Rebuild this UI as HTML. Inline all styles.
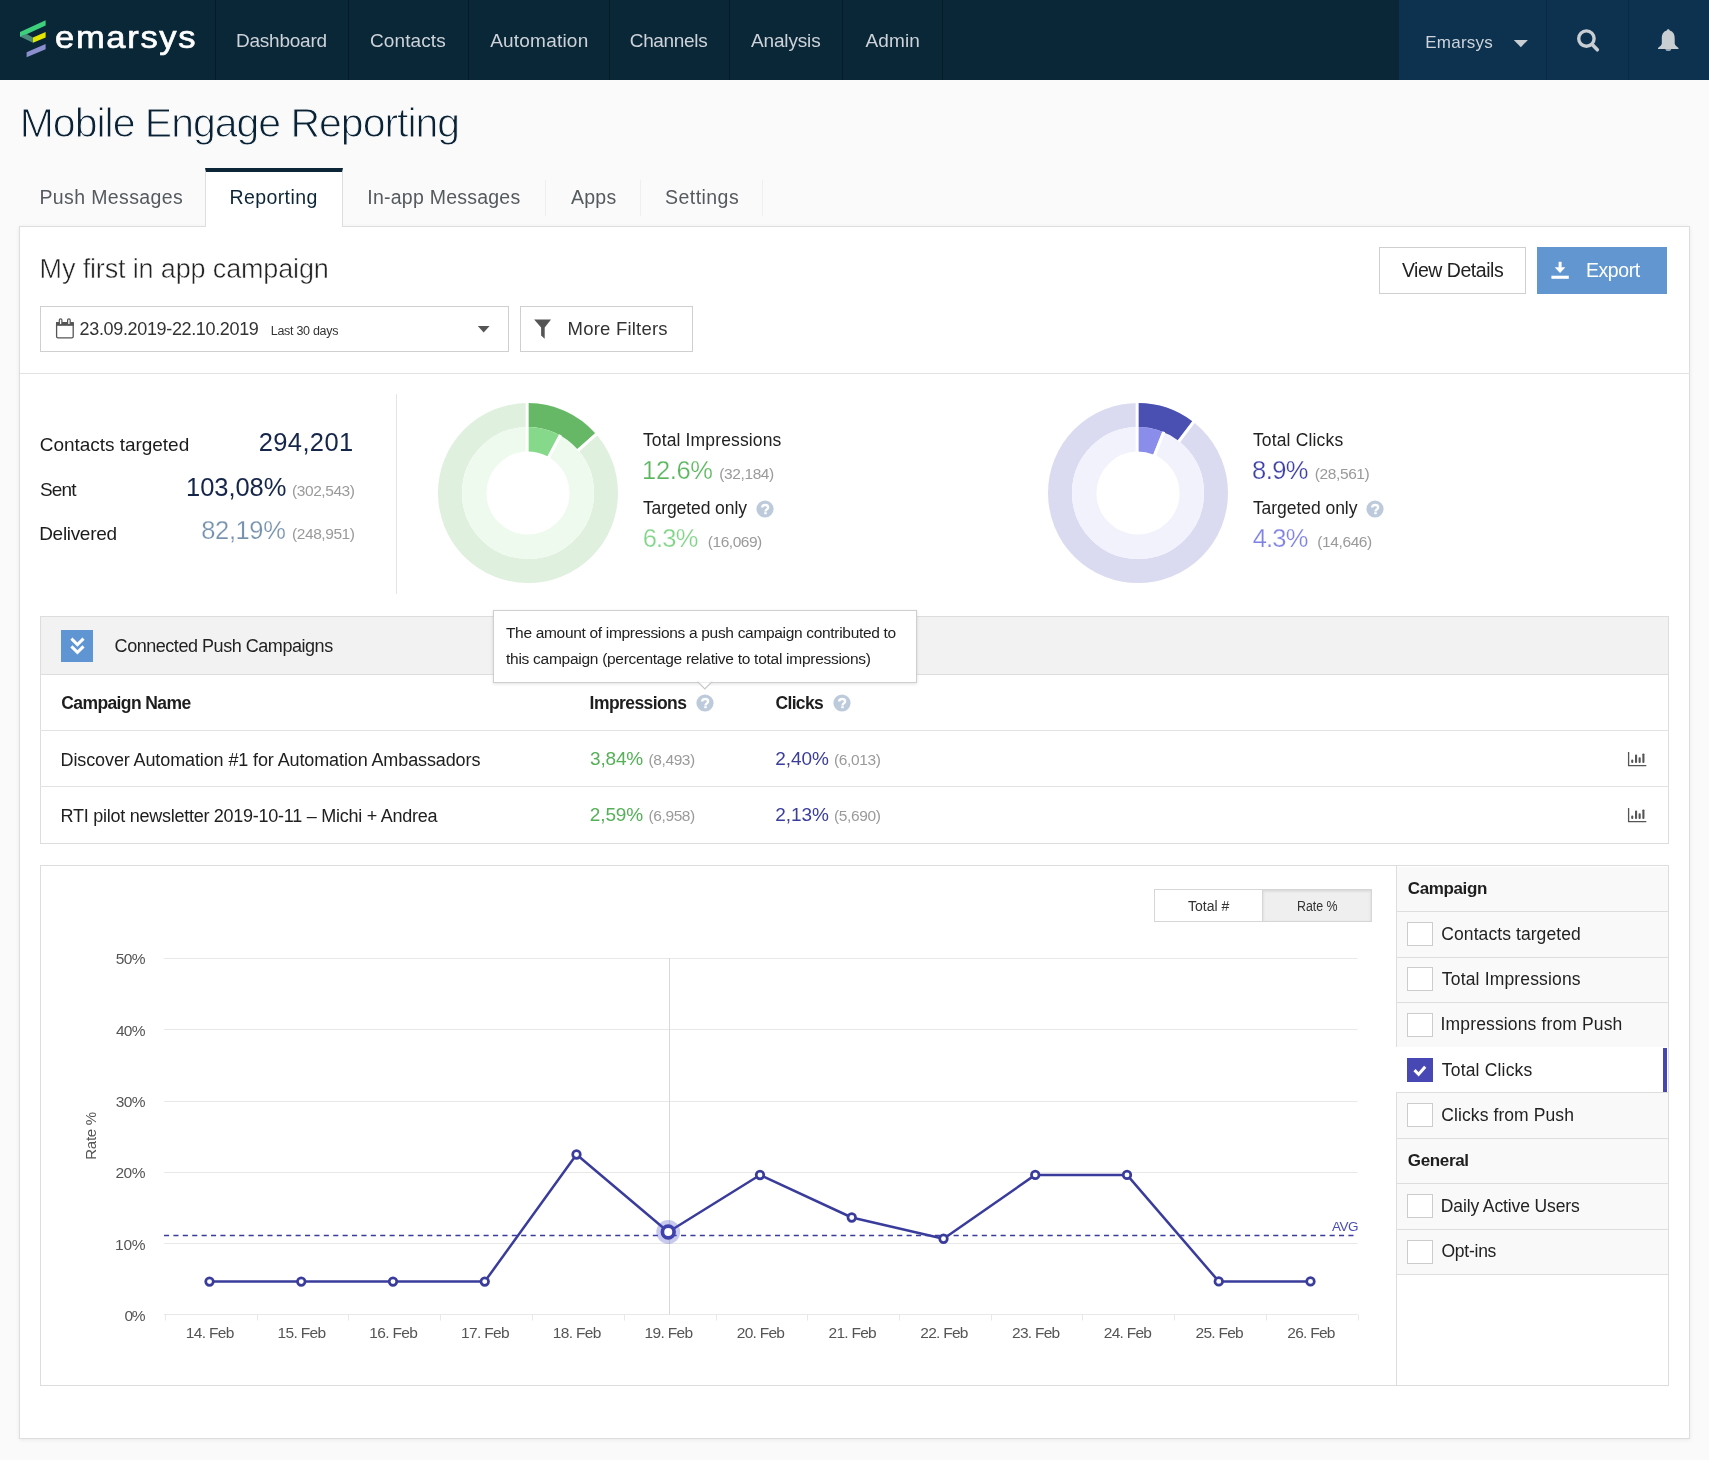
<!DOCTYPE html>
<html><head><meta charset="utf-8"><title>Mobile Engage Reporting</title><style>
html,body{margin:0;padding:0;width:1709px;height:1460px;overflow:hidden;background:#fafafa;font-family:"Liberation Sans",sans-serif;}
.a{position:absolute;box-sizing:border-box;}
.t{position:absolute;white-space:nowrap;font-family:"Liberation Sans",sans-serif;}
svg{position:absolute;overflow:visible;}
.page{position:absolute;left:0;top:0;width:1709px;height:1460px;will-change:transform;}
</style></head><body>
<div class="page">
<div class="a" style="left:0px;top:0px;width:1709px;height:80px;background:#0a2737;"></div>
<div class="a" style="left:1399px;top:0px;width:310px;height:80px;background:#0d3250;"></div>
<div class="a" style="left:215px;top:0px;width:1px;height:80px;background:#051b29;"></div>
<div class="a" style="left:348px;top:0px;width:1px;height:80px;background:#051b29;"></div>
<div class="a" style="left:468px;top:0px;width:1px;height:80px;background:#051b29;"></div>
<div class="a" style="left:609px;top:0px;width:1px;height:80px;background:#051b29;"></div>
<div class="a" style="left:729px;top:0px;width:1px;height:80px;background:#051b29;"></div>
<div class="a" style="left:842px;top:0px;width:1px;height:80px;background:#051b29;"></div>
<div class="a" style="left:942px;top:0px;width:1px;height:80px;background:#051b29;"></div>
<div class="a" style="left:1546px;top:0px;width:1px;height:80px;background:#0a2a42;"></div>
<div class="a" style="left:1628px;top:0px;width:1px;height:80px;background:#0a2a42;"></div>
<svg style="left:0;top:0" width="60" height="80" viewBox="0 0 60 80">
<polygon points="20,32.1 45.6,20.2 45.6,25.4 26.6,34.3 20,37" fill="#3ecf7d"/>
<polygon points="20,36.6 26.6,34.1 33,37.5 33,42.7" fill="#4b8b7b"/>
<polygon points="33,37.5 45.6,32.1 45.6,37.4 33,42.7" fill="#e2e600"/>
<polygon points="26.6,52.3 45.6,44 45.6,49.3 26.6,57.3" fill="#8c8fcf"/>
</svg>
<span class="t" style="left:235.88px;top:31px;font-size:19px;line-height:19px;color:#cdd3d9;letter-spacing:-0.207px;">Dashboard</span>
<span class="t" style="left:370.05px;top:31px;font-size:19px;line-height:19px;color:#cdd3d9;letter-spacing:0.094px;">Contacts</span>
<span class="t" style="left:490.20px;top:31px;font-size:19px;line-height:19px;color:#cdd3d9;letter-spacing:0.211px;">Automation</span>
<span class="t" style="left:629.75px;top:31px;font-size:19px;line-height:19px;color:#cdd3d9;letter-spacing:-0.337px;">Channels</span>
<span class="t" style="left:751.00px;top:31px;font-size:19px;line-height:19px;color:#cdd3d9;letter-spacing:-0.159px;">Analysis</span>
<span class="t" style="left:865.50px;top:31px;font-size:19px;line-height:19px;color:#cdd3d9;letter-spacing:0.143px;">Admin</span>
<span class="t" style="left:1425.24px;top:34px;font-size:17px;line-height:17px;color:#cdd3d9;letter-spacing:0.238px;">Emarsys</span>
<span class="t" style="left:54.62px;top:21px;font-size:32px;line-height:32px;color:#ffffff;letter-spacing:1.559px;transform:scaleX(1.0789);transform-origin:0 0;-webkit-text-stroke:0.7px #fff;">emarsys</span>
<svg style="left:1500px;top:30px" width="40" height="30" viewBox="1500 30 40 30"><polygon points="1513.8,39.9 1527.9,39.9 1520.85,47.2" fill="#c9ced3"/></svg>
<svg style="left:1560px;top:20px" width="50" height="40" viewBox="1560 20 50 40">
<circle cx="1586.4" cy="38.6" r="7.7" fill="none" stroke="#c9ced3" stroke-width="3.4"/>
<line x1="1592.2" y1="44.6" x2="1597.3" y2="49.8" stroke="#c9ced3" stroke-width="3.6" stroke-linecap="round"/>
</svg>
<svg style="left:1650px;top:20px" width="40" height="40" viewBox="1650 20 40 40">
<path d="M1668.3,29.2 c0.9,0 1.4,0.6 1.4,1.4 c3.6,1 5,3.9 5,7.8 v5.2 c0,1.6 1.8,2.6 3.8,4.4 v1 h-20.5 v-1 c2,-1.8 3.8,-2.8 3.8,-4.4 v-5.2 c0,-3.9 1.4,-6.8 5,-7.8 c0,-0.8 0.5,-1.4 1.5,-1.4 z" fill="#c9ced3"/>
<path d="M1665.4,49.2 h5.8 c0,1 -1.2,1.6 -2.9,1.6 c-1.7,0 -2.9,-0.6 -2.9,-1.6 z" fill="#c9ced3"/>
</svg>
<span class="t" style="left:19.72px;top:103px;font-size:41px;line-height:41px;color:#0a2236;letter-spacing:-1.011px;-webkit-text-stroke:1.0px #fafafa;">Mobile Engage Reporting</span>
<div class="a" style="left:545px;top:180px;width:1px;height:36px;background:#efefef;"></div>
<div class="a" style="left:640px;top:180px;width:1px;height:36px;background:#efefef;"></div>
<div class="a" style="left:762px;top:180px;width:1px;height:36px;background:#efefef;"></div>
<div class="a" style="left:19px;top:226px;width:1671px;height:1213px;background:#fff;border:1px solid #dedede;box-shadow:0 1px 4px rgba(0,0,0,0.07);"></div>
<div class="a" style="left:205px;top:168px;width:138px;height:59px;background:#fff;border-left:1px solid #dedede;border-right:1px solid #dedede;border-top:4px solid #0c2638;"></div>
<span class="t" style="left:39.44px;top:188px;font-size:19.5px;line-height:19.5px;color:#555a5e;letter-spacing:0.375px;">Push Messages</span>
<span class="t" style="left:229.44px;top:188px;font-size:19.5px;line-height:19.5px;color:#0c2638;letter-spacing:0.412px;">Reporting</span>
<span class="t" style="left:367.25px;top:188px;font-size:19.5px;line-height:19.5px;color:#555a5e;letter-spacing:0.241px;">In-app Messages</span>
<span class="t" style="left:571.00px;top:188px;font-size:19.5px;line-height:19.5px;color:#555a5e;letter-spacing:0.241px;">Apps</span>
<span class="t" style="left:665.12px;top:188px;font-size:19.5px;line-height:19.5px;color:#555a5e;letter-spacing:0.438px;">Settings</span>
<span class="t" style="left:39.59px;top:256px;font-size:27px;line-height:27px;color:#222222;letter-spacing:-0.147px;-webkit-text-stroke:0.5px #fff;">My first in app campaign</span>
<div class="a" style="left:40px;top:306px;width:469px;height:46px;border:1px solid #cfcfcf;"></div>
<svg style="left:50px;top:312px" width="30" height="32" viewBox="50 312 30 32">
<rect x="56.6" y="322.6" width="16.6" height="15.2" rx="1.4" fill="none" stroke="#555" stroke-width="1.3"/>
<rect x="56" y="322" width="17.8" height="3.8" fill="#555"/>
<rect x="59.3" y="318.8" width="2.6" height="6" rx="1.3" fill="#fff" stroke="#555" stroke-width="1.2"/>
<rect x="67.6" y="318.8" width="2.6" height="6" rx="1.3" fill="#fff" stroke="#555" stroke-width="1.2"/>
</svg>
<span class="t" style="left:79.60px;top:320px;font-size:18px;line-height:18px;color:#333333;letter-spacing:-0.345px;">23.09.2019-22.10.2019</span>
<span class="t" style="left:270.75px;top:325px;font-size:12.5px;line-height:12.5px;color:#333333;letter-spacing:-0.290px;">Last 30 days</span>
<svg style="left:470px;top:320px" width="30" height="20" viewBox="470 320 30 20"><polygon points="477.8,326 489.6,326 483.7,332.6" fill="#555"/></svg>
<div class="a" style="left:520px;top:306px;width:173px;height:46px;border:1px solid #cfcfcf;"></div>
<svg style="left:528px;top:312px" width="30" height="32" viewBox="528 312 30 32"><polygon points="534.1,319.6 551,319.6 544.7,327.6 544.7,338.8 541.1,335.6 541.1,327.6" fill="#555"/></svg>
<span class="t" style="left:567.52px;top:320px;font-size:18.5px;line-height:18.5px;color:#333333;letter-spacing:0.223px;">More Filters</span>
<div class="a" style="left:1379px;top:247px;width:147px;height:47px;border:1px solid #cfcfcf;background:#fff;"></div>
<span class="t" style="left:1401.90px;top:261px;font-size:19.5px;line-height:19.5px;color:#222222;letter-spacing:-0.471px;">View Details</span>
<div class="a" style="left:1537px;top:247px;width:130px;height:47px;background:#6196d0;"></div>
<svg style="left:1545px;top:255px" width="30" height="30" viewBox="1545 255 30 30">
<rect x="1558.6" y="261.8" width="3" height="6" fill="#fff"/>
<polygon points="1554.7,267.2 1565.4,267.2 1560.05,272.9" fill="#fff"/>
<rect x="1551.4" y="275.7" width="17.4" height="3.1" fill="#fff"/>
</svg>
<span class="t" style="left:1585.94px;top:261px;font-size:19.5px;line-height:19.5px;color:#ffffff;letter-spacing:-0.420px;">Export</span>
<div class="a" style="left:19px;top:373px;width:1671px;height:1px;background:#e2e2e2;"></div>
<span class="t" style="left:39.80px;top:435px;font-size:19px;line-height:19px;color:#1c1c1c;letter-spacing:-0.036px;">Contacts targeted</span>
<span class="t" style="left:258.73px;top:430px;font-size:25.5px;line-height:25.5px;color:#15264a;letter-spacing:0.373px;">294,201</span>
<span class="t" style="left:39.90px;top:480px;font-size:19px;line-height:19px;color:#1c1c1c;letter-spacing:-0.782px;">Sent</span>
<span class="t" style="left:186.09px;top:475px;font-size:25.5px;line-height:25.5px;color:#15264a;letter-spacing:-0.070px;">103,08%</span>
<span class="t" style="left:292.07px;top:483px;font-size:15.5px;line-height:15.5px;color:#9a9a9a;letter-spacing:-0.435px;">(302,543)</span>
<span class="t" style="left:39.23px;top:524px;font-size:19px;line-height:19px;color:#1c1c1c;letter-spacing:-0.315px;">Delivered</span>
<span class="t" style="left:201.35px;top:518px;font-size:25.5px;line-height:25.5px;color:#7591ad;letter-spacing:-0.406px;-webkit-text-stroke:0.25px #fff;">82,19%</span>
<span class="t" style="left:292.07px;top:526px;font-size:15.5px;line-height:15.5px;color:#9a9a9a;letter-spacing:-0.435px;">(248,951)</span>
<div class="a" style="left:396px;top:394px;width:1px;height:200px;background:#e4e4e4;"></div>
<svg style="left:428.25px;top:393px" width="200" height="200" viewBox="428.25 393 200 200"><circle cx="528.25" cy="493" r="78" fill="none" stroke="#dff0de" stroke-width="24"/><circle cx="528.25" cy="493" r="53.75" fill="none" stroke="#effaee" stroke-width="24.5"/><path d="M528.25,403.00 A90,90 0 0 1 595.45,433.13 L577.53,449.09 A66,66 0 0 0 528.25,427.00 Z" fill="#66b866"/><path d="M528.25,427.00 A66,66 0 0 1 559.24,434.73 L547.73,456.36 A41.5,41.5 0 0 0 528.25,451.50 Z" fill="#86d98a"/><line x1="527.4" y1="402" x2="527.4" y2="453" stroke="#fff" stroke-width="3"/><line x1="578.15" y1="450.55" x2="597.19" y2="433.58" stroke="#fff" stroke-width="3"/><line x1="548.35" y1="458.39" x2="560.79" y2="434.99" stroke="#fff" stroke-width="3"/></svg>
<svg style="left:1038.25px;top:393px" width="200" height="200" viewBox="1038.25 393 200 200"><circle cx="1138.25" cy="493" r="78" fill="none" stroke="#dadbf0" stroke-width="24"/><circle cx="1138.25" cy="493" r="53.75" fill="none" stroke="#f2f2fd" stroke-width="24.5"/><path d="M1138.25,403.00 A90,90 0 0 1 1192.54,421.22 L1178.06,440.36 A66,66 0 0 0 1138.25,427.00 Z" fill="#4a4fb2"/><path d="M1138.25,427.00 A66,66 0 0 1 1162.55,431.63 L1153.53,454.41 A41.5,41.5 0 0 0 1138.25,451.50 Z" fill="#8b8dea"/><line x1="1137.4" y1="402" x2="1137.4" y2="453" stroke="#fff" stroke-width="3"/><line x1="1178.96" y1="441.66" x2="1194.34" y2="421.32" stroke="#fff" stroke-width="3"/><line x1="1154.37" y1="456.36" x2="1164.12" y2="431.72" stroke="#fff" stroke-width="3"/></svg>
<span class="t" style="left:642.90px;top:432px;font-size:17.5px;line-height:17.5px;color:#222222;letter-spacing:0.145px;">Total Impressions</span>
<span class="t" style="left:642.09px;top:458px;font-size:25.5px;line-height:25.5px;color:#5cb65f;letter-spacing:-0.372px;-webkit-text-stroke:0.25px #fff;">12.6%</span>
<span class="t" style="left:719.32px;top:466px;font-size:15.5px;line-height:15.5px;color:#9a9a9a;letter-spacing:-0.400px;">(32,184)</span>
<span class="t" style="left:642.90px;top:500px;font-size:17.5px;line-height:17.5px;color:#222222;letter-spacing:-0.082px;">Targeted only</span>
<svg style="left:754.6px;top:498.5px" width="20" height="20" viewBox="754.6 498.5 20 20"><circle cx="764.6" cy="508.5" r="8.6" fill="#bccadb"/><path d="M761.80,507.00 C761.80,505.10 763.30,504.50 764.90,504.50 C766.70,504.50 767.70,505.60 767.70,507.00 C767.70,508.90 765.10,508.90 765.10,510.90" fill="none" stroke="#fff" stroke-width="2.4"/><rect x="763.85" y="511.70" width="2.5" height="2" fill="#fff"/></svg>
<span class="t" style="left:642.73px;top:526px;font-size:25.5px;line-height:25.5px;color:#7fd486;letter-spacing:-0.824px;-webkit-text-stroke:0.25px #fff;">6.3%</span>
<span class="t" style="left:707.82px;top:534px;font-size:15.5px;line-height:15.5px;color:#9a9a9a;letter-spacing:-0.471px;">(16,069)</span>
<span class="t" style="left:1252.90px;top:432px;font-size:17.5px;line-height:17.5px;color:#222222;letter-spacing:0.159px;">Total Clicks</span>
<span class="t" style="left:1252.10px;top:458px;font-size:25.5px;line-height:25.5px;color:#3d40a6;letter-spacing:-0.617px;-webkit-text-stroke:0.25px #fff;">8.9%</span>
<span class="t" style="left:1314.82px;top:466px;font-size:15.5px;line-height:15.5px;color:#9a9a9a;letter-spacing:-0.400px;">(28,561)</span>
<span class="t" style="left:1252.90px;top:500px;font-size:17.5px;line-height:17.5px;color:#222222;letter-spacing:-0.041px;">Targeted only</span>
<svg style="left:1364.7px;top:498.5px" width="20" height="20" viewBox="1364.7 498.5 20 20"><circle cx="1374.7" cy="508.5" r="8.6" fill="#bccadb"/><path d="M1371.90,507.00 C1371.90,505.10 1373.40,504.50 1375.00,504.50 C1376.80,504.50 1377.80,505.60 1377.80,507.00 C1377.80,508.90 1375.20,508.90 1375.20,510.90" fill="none" stroke="#fff" stroke-width="2.4"/><rect x="1373.95" y="511.70" width="2.5" height="2" fill="#fff"/></svg>
<span class="t" style="left:1252.74px;top:526px;font-size:25.5px;line-height:25.5px;color:#7e82e2;letter-spacing:-0.829px;-webkit-text-stroke:0.25px #fff;">4.3%</span>
<span class="t" style="left:1317.32px;top:534px;font-size:15.5px;line-height:15.5px;color:#9a9a9a;letter-spacing:-0.400px;">(14,646)</span>
<div class="a" style="left:40px;top:616px;width:1629px;height:228px;border:1px solid #dddddd;background:#fff;"></div>
<div class="a" style="left:41px;top:617px;width:1627px;height:57px;background:#f2f2f2;"></div>
<div class="a" style="left:40px;top:674px;width:1629px;height:1px;background:#dddddd;"></div>
<div class="a" style="left:40px;top:730px;width:1629px;height:1px;background:#e2e2e2;"></div>
<div class="a" style="left:40px;top:786px;width:1629px;height:1px;background:#e2e2e2;"></div>
<div class="a" style="left:61px;top:630px;width:32px;height:32px;background:#5e95d2;"></div>
<svg style="left:61px;top:630px" width="32" height="32" viewBox="61 630 32 32">
<polyline points="71.4,638.6 77.45,644.6 83.5,638.6" fill="none" stroke="#fff" stroke-width="3"/>
<polyline points="71.4,646.4 77.45,652.4 83.5,646.4" fill="none" stroke="#fff" stroke-width="3"/>
</svg>
<span class="t" style="left:114.60px;top:637px;font-size:18px;line-height:18px;color:#222222;letter-spacing:-0.461px;">Connected Push Campaigns</span>
<span class="t" style="left:61.30px;top:695px;font-size:17.5px;line-height:17.5px;color:#1e1e1e;font-weight:700;letter-spacing:-0.608px;">Campaign Name</span>
<span class="t" style="left:589.61px;top:695px;font-size:17.5px;line-height:17.5px;color:#1e1e1e;font-weight:700;letter-spacing:-0.574px;">Impressions</span>
<svg style="left:694.5px;top:693.2px" width="20" height="20" viewBox="694.5 693.2 20 20"><circle cx="704.5" cy="703.2" r="8.6" fill="#bccadb"/><path d="M701.70,701.70 C701.70,699.80 703.20,699.20 704.80,699.20 C706.60,699.20 707.60,700.30 707.60,701.70 C707.60,703.60 705.00,703.60 705.00,705.60" fill="none" stroke="#fff" stroke-width="2.4"/><rect x="703.75" y="706.40" width="2.5" height="2" fill="#fff"/></svg>
<span class="t" style="left:775.55px;top:695px;font-size:17.5px;line-height:17.5px;color:#1e1e1e;font-weight:700;letter-spacing:-0.678px;">Clicks</span>
<svg style="left:832.1px;top:693.2px" width="20" height="20" viewBox="832.1 693.2 20 20"><circle cx="842.1" cy="703.2" r="8.6" fill="#bccadb"/><path d="M839.30,701.70 C839.30,699.80 840.80,699.20 842.40,699.20 C844.20,699.20 845.20,700.30 845.20,701.70 C845.20,703.60 842.60,703.60 842.60,705.60" fill="none" stroke="#fff" stroke-width="2.4"/><rect x="841.35" y="706.40" width="2.5" height="2" fill="#fff"/></svg>
<span class="t" style="left:60.56px;top:751px;font-size:18px;line-height:18px;color:#202020;letter-spacing:-0.112px;">Discover Automation #1 for Automation Ambassadors</span>
<span class="t" style="left:589.99px;top:749px;font-size:19px;line-height:19px;color:#55b058;letter-spacing:-0.172px;">3,84%</span>
<span class="t" style="left:648.57px;top:752px;font-size:15.5px;line-height:15.5px;color:#9a9a9a;letter-spacing:-0.408px;">(8,493)</span>
<span class="t" style="left:775.30px;top:749px;font-size:19px;line-height:19px;color:#3a3d9c;letter-spacing:-0.062px;">2,40%</span>
<span class="t" style="left:834.07px;top:752px;font-size:15.5px;line-height:15.5px;color:#9a9a9a;letter-spacing:-0.366px;">(6,013)</span>
<span class="t" style="left:60.56px;top:807px;font-size:18px;line-height:18px;color:#202020;letter-spacing:-0.258px;">RTI pilot newsletter 2019-10-11 – Michi + Andrea</span>
<span class="t" style="left:589.80px;top:805px;font-size:19px;line-height:19px;color:#55b058;letter-spacing:-0.125px;">2,59%</span>
<span class="t" style="left:648.57px;top:808px;font-size:15.5px;line-height:15.5px;color:#9a9a9a;letter-spacing:-0.408px;">(6,958)</span>
<span class="t" style="left:775.30px;top:805px;font-size:19px;line-height:19px;color:#3a3d9c;letter-spacing:-0.062px;">2,13%</span>
<span class="t" style="left:834.07px;top:808px;font-size:15.5px;line-height:15.5px;color:#9a9a9a;letter-spacing:-0.366px;">(5,690)</span>
<svg style="left:1624px;top:747.8px" width="28" height="22" viewBox="1624 747.8 28 22"><path d="M1628.6,751.8 V765.5 H1646.3" fill="none" stroke="#555" stroke-width="1.3"/><rect x="1631.2" y="759.3" width="2.1" height="3.4" rx="0.9" fill="#555"/><rect x="1635.0" y="754.4" width="2.1" height="8.3" rx="0.9" fill="#555"/><rect x="1638.6" y="756.9999999999999" width="2.1" height="5.7" rx="0.9" fill="#555"/><rect x="1642.35" y="753.1999999999999" width="2.1" height="9.5" rx="0.9" fill="#555"/></svg>
<svg style="left:1624px;top:803.8px" width="28" height="22" viewBox="1624 803.8 28 22"><path d="M1628.6,807.8 V821.5 H1646.3" fill="none" stroke="#555" stroke-width="1.3"/><rect x="1631.2" y="815.3" width="2.1" height="3.4" rx="0.9" fill="#555"/><rect x="1635.0" y="810.4" width="2.1" height="8.3" rx="0.9" fill="#555"/><rect x="1638.6" y="812.9999999999999" width="2.1" height="5.7" rx="0.9" fill="#555"/><rect x="1642.35" y="809.1999999999999" width="2.1" height="9.5" rx="0.9" fill="#555"/></svg>
<div class="a" style="left:493px;top:610px;width:424px;height:73px;background:#fff;border:1px solid #cfcfcf;box-shadow:0 1px 3px rgba(0,0,0,0.12);"></div>
<svg style="left:690px;top:675px" width="30" height="20" viewBox="690 675 30 20">
<polygon points="698.2,682.2 711.5,682.2 704.85,689" fill="#fff" stroke="#c6c6c6" stroke-width="1.1"/>
<rect x="699" y="679" width="11.7" height="3.6" fill="#fff"/>
</svg>
<span class="t" style="left:505.94px;top:625px;font-size:15.5px;line-height:15.5px;color:#222222;letter-spacing:-0.315px;">The amount of impressions a push campaign contributed to</span>
<span class="t" style="left:506.02px;top:651px;font-size:15.5px;line-height:15.5px;color:#222222;letter-spacing:-0.273px;">this campaign (percentage relative to total impressions)</span>
<div class="a" style="left:40px;top:865px;width:1629px;height:521px;border:1px solid #dddddd;background:#fff;"></div>
<svg style="left:40px;top:865px" width="1356" height="521" viewBox="40 865 1356 521"><line x1="164" y1="958.5" x2="1357.5" y2="958.5" stroke="#e8e8e8" stroke-width="1"/><line x1="164" y1="1029.5" x2="1357.5" y2="1029.5" stroke="#e8e8e8" stroke-width="1"/><line x1="164" y1="1101.5" x2="1357.5" y2="1101.5" stroke="#e8e8e8" stroke-width="1"/><line x1="164" y1="1172.5" x2="1357.5" y2="1172.5" stroke="#e8e8e8" stroke-width="1"/><line x1="164" y1="1243.5" x2="1357.5" y2="1243.5" stroke="#e8e8e8" stroke-width="1"/><line x1="164" y1="1314.5" x2="1357.5" y2="1314.5" stroke="#e8e8e8" stroke-width="1"/><line x1="165.5" y1="1314.5" x2="165.5" y2="1320.5" stroke="#e8e8e8" stroke-width="1"/><line x1="257.5" y1="1314.5" x2="257.5" y2="1320.5" stroke="#e8e8e8" stroke-width="1"/><line x1="348.5" y1="1314.5" x2="348.5" y2="1320.5" stroke="#e8e8e8" stroke-width="1"/><line x1="440.5" y1="1314.5" x2="440.5" y2="1320.5" stroke="#e8e8e8" stroke-width="1"/><line x1="532.5" y1="1314.5" x2="532.5" y2="1320.5" stroke="#e8e8e8" stroke-width="1"/><line x1="624.5" y1="1314.5" x2="624.5" y2="1320.5" stroke="#e8e8e8" stroke-width="1"/><line x1="716.5" y1="1314.5" x2="716.5" y2="1320.5" stroke="#e8e8e8" stroke-width="1"/><line x1="807.5" y1="1314.5" x2="807.5" y2="1320.5" stroke="#e8e8e8" stroke-width="1"/><line x1="899.5" y1="1314.5" x2="899.5" y2="1320.5" stroke="#e8e8e8" stroke-width="1"/><line x1="991.5" y1="1314.5" x2="991.5" y2="1320.5" stroke="#e8e8e8" stroke-width="1"/><line x1="1082.5" y1="1314.5" x2="1082.5" y2="1320.5" stroke="#e8e8e8" stroke-width="1"/><line x1="1174.5" y1="1314.5" x2="1174.5" y2="1320.5" stroke="#e8e8e8" stroke-width="1"/><line x1="1266.5" y1="1314.5" x2="1266.5" y2="1320.5" stroke="#e8e8e8" stroke-width="1"/><line x1="1358.5" y1="1314.5" x2="1358.5" y2="1320.5" stroke="#e8e8e8" stroke-width="1"/><line x1="669.5" y1="958" x2="669.5" y2="1314.5" stroke="#d9d9d9" stroke-width="1"/><line x1="164" y1="1235.6" x2="1357.5" y2="1235.6" stroke="#3a3d9c" stroke-width="1.5" stroke-dasharray="5.1,4.3"/><polyline points="209.50,1281.60 301.25,1281.60 393.00,1281.60 484.75,1281.60 576.50,1154.50 668.25,1232.00 760.00,1175.00 851.75,1217.50 943.50,1238.75 1035.25,1174.90 1127.00,1174.90 1218.75,1281.40 1310.50,1281.40" fill="none" stroke="#3a3c9c" stroke-width="2.5" stroke-linejoin="round"/><circle cx="209.50" cy="1281.6" r="3.8" fill="#fff" stroke="#3a3c9c" stroke-width="2.7"/><circle cx="301.25" cy="1281.6" r="3.8" fill="#fff" stroke="#3a3c9c" stroke-width="2.7"/><circle cx="393.00" cy="1281.6" r="3.8" fill="#fff" stroke="#3a3c9c" stroke-width="2.7"/><circle cx="484.75" cy="1281.6" r="3.8" fill="#fff" stroke="#3a3c9c" stroke-width="2.7"/><circle cx="576.50" cy="1154.5" r="3.8" fill="#fff" stroke="#3a3c9c" stroke-width="2.7"/><circle cx="668.25" cy="1232" r="11.9" fill="#4a4ec8" fill-opacity="0.3"/><circle cx="668.25" cy="1232" r="5.85" fill="#fff" stroke="#3f42ad" stroke-width="3.7"/><circle cx="760.00" cy="1175" r="3.8" fill="#fff" stroke="#3a3c9c" stroke-width="2.7"/><circle cx="851.75" cy="1217.5" r="3.8" fill="#fff" stroke="#3a3c9c" stroke-width="2.7"/><circle cx="943.50" cy="1238.75" r="3.8" fill="#fff" stroke="#3a3c9c" stroke-width="2.7"/><circle cx="1035.25" cy="1174.9" r="3.8" fill="#fff" stroke="#3a3c9c" stroke-width="2.7"/><circle cx="1127.00" cy="1174.9" r="3.8" fill="#fff" stroke="#3a3c9c" stroke-width="2.7"/><circle cx="1218.75" cy="1281.4" r="3.8" fill="#fff" stroke="#3a3c9c" stroke-width="2.7"/><circle cx="1310.50" cy="1281.4" r="3.8" fill="#fff" stroke="#3a3c9c" stroke-width="2.7"/></svg>
<span class="t" style="left:115.63px;top:951px;font-size:15.5px;line-height:15.5px;color:#555555;letter-spacing:-0.544px;">50%</span>
<span class="t" style="left:115.94px;top:1023px;font-size:15.5px;line-height:15.5px;color:#555555;letter-spacing:-0.699px;">40%</span>
<span class="t" style="left:115.63px;top:1094px;font-size:15.5px;line-height:15.5px;color:#555555;letter-spacing:-0.544px;">30%</span>
<span class="t" style="left:115.47px;top:1165px;font-size:15.5px;line-height:15.5px;color:#555555;letter-spacing:-0.466px;">20%</span>
<span class="t" style="left:115.09px;top:1237px;font-size:15.5px;line-height:15.5px;color:#555555;letter-spacing:-0.273px;">10%</span>
<span class="t" style="left:124.38px;top:1308px;font-size:15.5px;line-height:15.5px;color:#555555;letter-spacing:-1.235px;">0%</span>
<span class="t" style="left:90px;top:1136px;font-size:15px;line-height:15px;color:#555;letter-spacing:-0.3px;transform:translate(-50%,-50%) rotate(-90deg);transform-origin:center;">Rate %</span>
<span class="t" style="left:185.86px;top:1325px;font-size:15.5px;line-height:15.5px;color:#555555;letter-spacing:-0.669px;">14. Feb</span>
<span class="t" style="left:277.61px;top:1325px;font-size:15.5px;line-height:15.5px;color:#555555;letter-spacing:-0.669px;">15. Feb</span>
<span class="t" style="left:369.36px;top:1325px;font-size:15.5px;line-height:15.5px;color:#555555;letter-spacing:-0.669px;">16. Feb</span>
<span class="t" style="left:461.11px;top:1325px;font-size:15.5px;line-height:15.5px;color:#555555;letter-spacing:-0.669px;">17. Feb</span>
<span class="t" style="left:552.86px;top:1325px;font-size:15.5px;line-height:15.5px;color:#555555;letter-spacing:-0.669px;">18. Feb</span>
<span class="t" style="left:644.61px;top:1325px;font-size:15.5px;line-height:15.5px;color:#555555;letter-spacing:-0.669px;">19. Feb</span>
<span class="t" style="left:736.75px;top:1325px;font-size:15.5px;line-height:15.5px;color:#555555;letter-spacing:-0.733px;">20. Feb</span>
<span class="t" style="left:828.50px;top:1325px;font-size:15.5px;line-height:15.5px;color:#555555;letter-spacing:-0.733px;">21. Feb</span>
<span class="t" style="left:920.25px;top:1325px;font-size:15.5px;line-height:15.5px;color:#555555;letter-spacing:-0.733px;">22. Feb</span>
<span class="t" style="left:1012.00px;top:1325px;font-size:15.5px;line-height:15.5px;color:#555555;letter-spacing:-0.733px;">23. Feb</span>
<span class="t" style="left:1103.75px;top:1325px;font-size:15.5px;line-height:15.5px;color:#555555;letter-spacing:-0.733px;">24. Feb</span>
<span class="t" style="left:1195.50px;top:1325px;font-size:15.5px;line-height:15.5px;color:#555555;letter-spacing:-0.733px;">25. Feb</span>
<span class="t" style="left:1287.25px;top:1325px;font-size:15.5px;line-height:15.5px;color:#555555;letter-spacing:-0.733px;">26. Feb</span>
<span class="t" style="left:1332.00px;top:1220px;font-size:13.5px;line-height:13.5px;color:#4a4fb0;letter-spacing:-0.514px;">AVG</span>
<div class="a" style="left:1154px;top:889px;width:218px;height:33px;border:1px solid #d6d6d6;background:#fff;"></div>
<div class="a" style="left:1262px;top:890px;width:109px;height:31px;background:#efefef;box-shadow:inset 0 1px 3px rgba(0,0,0,0.12);border-left:1px solid #d6d6d6;"></div>
<span class="t" style="left:1187.72px;top:899px;font-size:14px;line-height:14px;color:#333;transform:scaleX(1.0029);transform-origin:0 0;">Total #</span>
<span class="t" style="left:1296.61px;top:899px;font-size:14px;line-height:14px;color:#333;transform:scaleX(0.8847);transform-origin:0 0;">Rate %</span>
<div class="a" style="left:1396px;top:865px;width:273px;height:521px;border:1px solid #dddddd;background:#fff;"></div>
<div class="a" style="left:1397px;top:867px;width:271px;height:44px;background:#f9f9f9;"></div>
<div class="a" style="left:1396px;top:911px;width:273px;height:1px;background:#dedede;"></div>
<span class="t" style="left:1407.82px;top:880px;font-size:17px;line-height:17px;color:#1e1e1e;font-weight:700;letter-spacing:-0.385px;">Campaign</span>
<div class="a" style="left:1397px;top:912px;width:271px;height:45px;background:#f9f9f9;"></div>
<div class="a" style="left:1396px;top:957px;width:273px;height:1px;background:#dedede;"></div>
<div class="a" style="left:1407px;top:922.0px;width:26px;height:24px;background:#fff;border:1px solid #cccccc;"></div>
<span class="t" style="left:1441.33px;top:926px;font-size:17.5px;line-height:17.5px;color:#222222;letter-spacing:0.078px;">Contacts targeted</span>
<div class="a" style="left:1397px;top:958px;width:271px;height:44px;background:#f9f9f9;"></div>
<div class="a" style="left:1396px;top:1002px;width:273px;height:1px;background:#dedede;"></div>
<div class="a" style="left:1407px;top:967.0px;width:26px;height:24px;background:#fff;border:1px solid #cccccc;"></div>
<span class="t" style="left:1441.85px;top:971px;font-size:17.5px;line-height:17.5px;color:#222222;letter-spacing:0.163px;">Total Impressions</span>
<div class="a" style="left:1397px;top:1003px;width:271px;height:44px;background:#f9f9f9;"></div>
<div class="a" style="left:1396px;top:1047px;width:273px;height:1px;background:#dedede;"></div>
<div class="a" style="left:1407px;top:1012.5px;width:26px;height:24px;background:#fff;border:1px solid #cccccc;"></div>
<span class="t" style="left:1440.62px;top:1016px;font-size:17.5px;line-height:17.5px;color:#222222;letter-spacing:0.139px;">Impressions from Push</span>
<div class="a" style="left:1396px;top:1047px;width:272px;height:45px;background:#fff;"></div>
<div class="a" style="left:1663px;top:1048px;width:4px;height:44px;background:#4648b0;"></div>
<div class="a" style="left:1396px;top:1092px;width:273px;height:1px;background:#dedede;"></div>
<div class="a" style="left:1407px;top:1057.5px;width:26px;height:24px;background:#4848b4;"></div>
<svg style="left:1407px;top:1058px" width="26" height="24" viewBox="1407 1058 26 24"><polyline points="1414.5,1070.1 1418.6,1074.2 1425.2,1066.8" fill="none" stroke="#fff" stroke-width="3"/></svg>
<span class="t" style="left:1441.85px;top:1062px;font-size:17.5px;line-height:17.5px;color:#222222;letter-spacing:0.173px;">Total Clicks</span>
<div class="a" style="left:1397px;top:1093px;width:271px;height:45px;background:#f9f9f9;"></div>
<div class="a" style="left:1396px;top:1138px;width:273px;height:1px;background:#dedede;"></div>
<div class="a" style="left:1407px;top:1103.0px;width:26px;height:24px;background:#fff;border:1px solid #cccccc;"></div>
<span class="t" style="left:1441.33px;top:1107px;font-size:17.5px;line-height:17.5px;color:#222222;letter-spacing:0.084px;">Clicks from Push</span>
<div class="a" style="left:1397px;top:1139px;width:271px;height:44px;background:#f9f9f9;"></div>
<div class="a" style="left:1396px;top:1183px;width:273px;height:1px;background:#dedede;"></div>
<span class="t" style="left:1407.82px;top:1152px;font-size:17px;line-height:17px;color:#1e1e1e;font-weight:700;letter-spacing:-0.342px;">General</span>
<div class="a" style="left:1397px;top:1184px;width:271px;height:45px;background:#f9f9f9;"></div>
<div class="a" style="left:1396px;top:1229px;width:273px;height:1px;background:#dedede;"></div>
<div class="a" style="left:1407px;top:1194.0px;width:26px;height:24px;background:#fff;border:1px solid #cccccc;"></div>
<span class="t" style="left:1440.80px;top:1198px;font-size:17.5px;line-height:17.5px;color:#222222;letter-spacing:-0.120px;">Daily Active Users</span>
<div class="a" style="left:1397px;top:1230px;width:271px;height:44px;background:#f9f9f9;"></div>
<div class="a" style="left:1396px;top:1274px;width:273px;height:1px;background:#dedede;"></div>
<div class="a" style="left:1407px;top:1239.5px;width:26px;height:24px;background:#fff;border:1px solid #cccccc;"></div>
<span class="t" style="left:1441.41px;top:1243px;font-size:17.5px;line-height:17.5px;color:#222222;letter-spacing:-0.240px;">Opt-ins</span>
</div>
</body></html>
